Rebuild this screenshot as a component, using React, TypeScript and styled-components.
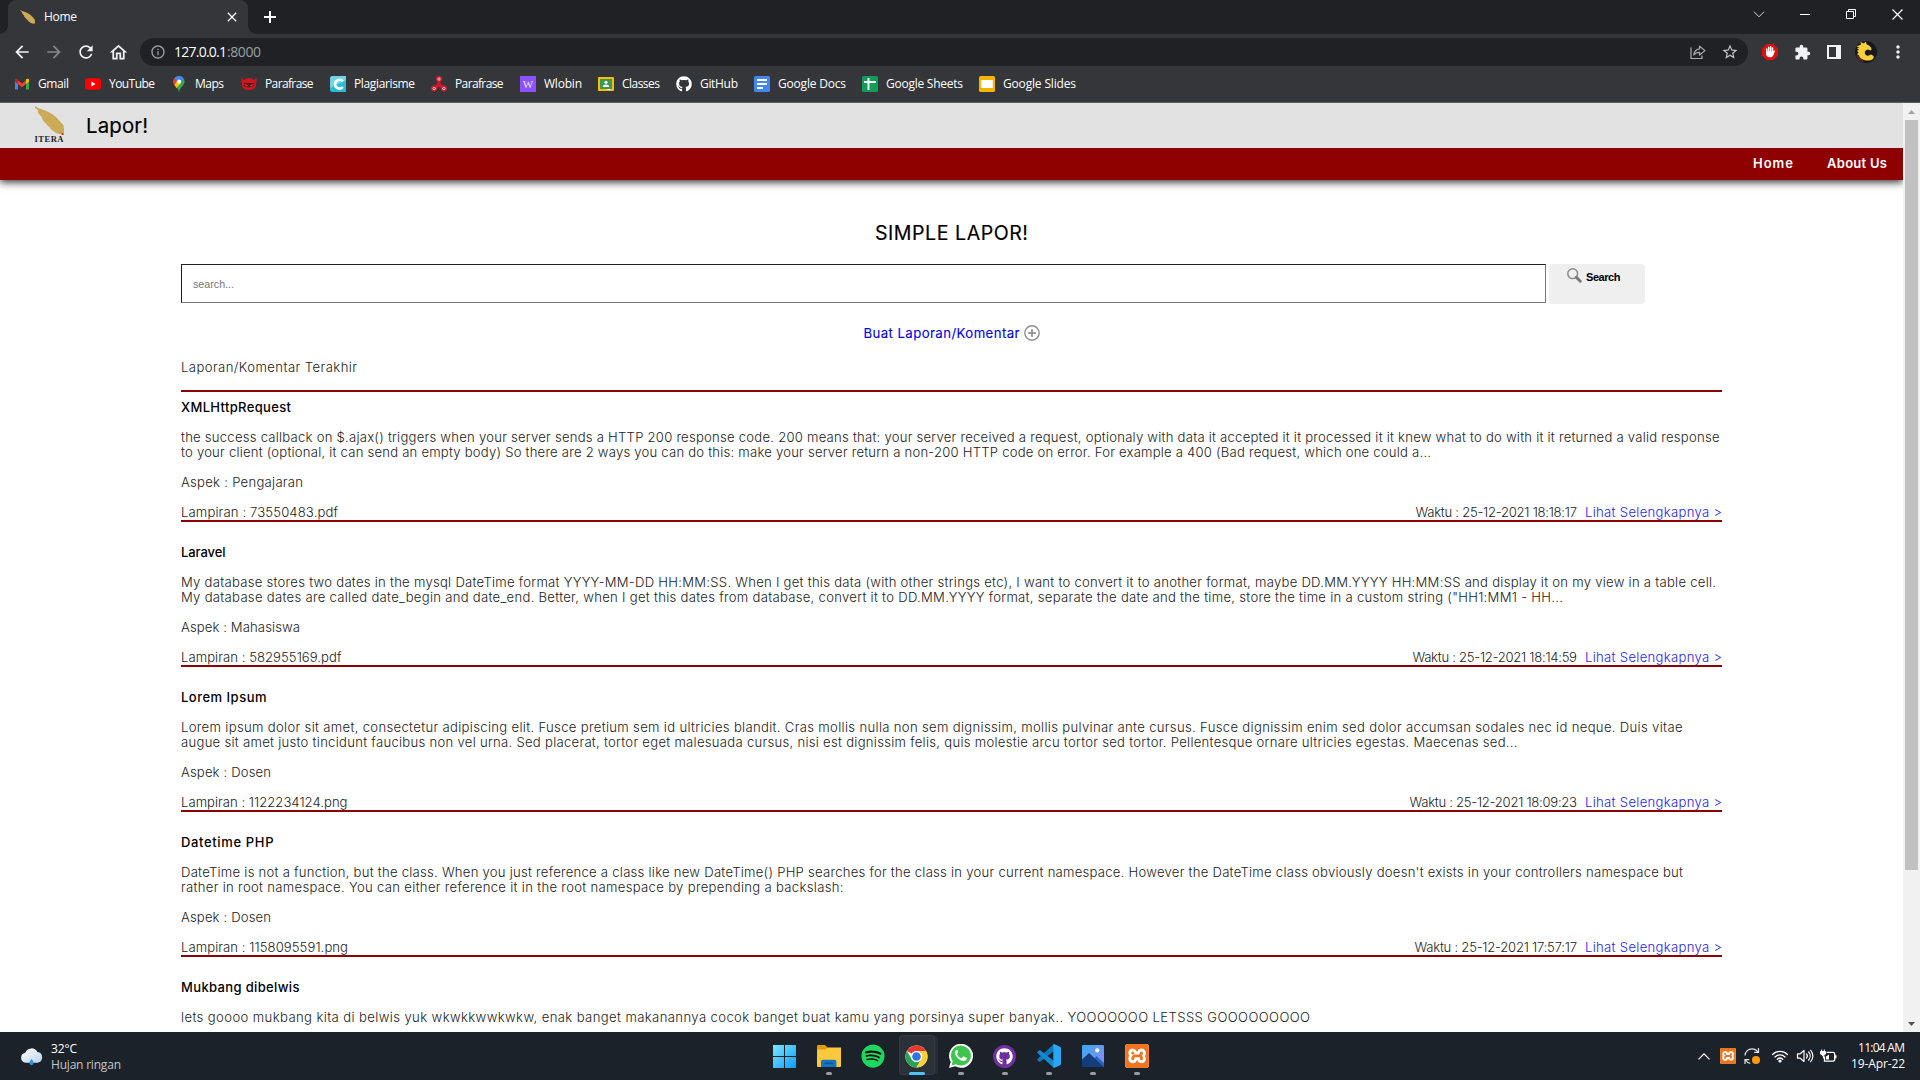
import React, { useLayoutEffect, useRef, useState } from 'react';
import styled, { createGlobalStyle, css } from 'styled-components';
import {
  MdArrowBack, MdArrowForward, MdRefresh, MdOutlineHome, MdInfoOutline,
  MdStarBorder, MdMoreVert, MdExtension, MdClose,
} from 'react-icons/md';
import { FaGithub, FaSpotify } from 'react-icons/fa';
import { SiXampp } from 'react-icons/si';

const Global = createGlobalStyle`
  * { box-sizing: border-box; }
  body { margin: 0; background: #fff; overflow: hidden; }
  p, h1, h2, h3 { margin: 0; }
  svg { display: block; flex: none; }
  a { text-decoration: none; }
`;

const UI = `'Open Sans', 'Noto Sans', sans-serif`;
const SITE = `Inter, 'Open Sans', sans-serif`;

/* ---------- text set to a fixed measure ---------- */

const Measure = styled.span<{ $w: number }>`
  display: inline-block;
  width: ${p => p.$w}px;
  white-space: nowrap;
`;

function Fit({ w, children }: { w: number; children: string }) {
  const ref = useRef<HTMLSpanElement>(null);
  const [gap, setGap] = useState(0);
  useLayoutEffect(() => {
    const natural = ref.current!.getBoundingClientRect().width;
    setGap((w - natural) / Math.max(1, children.length - 1));
  }, [w, children]);
  return (
    <Measure $w={w}>
      <span ref={ref} style={{ letterSpacing: gap }}>{children}</span>
    </Measure>
  );
}

/* ---------- browser chrome ---------- */

const Screen = styled.div`
  display: flex;
  flex-direction: column;
  width: 1920px;
  height: 1080px;
  overflow: hidden;
  font-family: ${UI};
`;

const TabStrip = styled.div`
  display: flex;
  flex: none;
  height: 34px;
  padding-left: 8px;
  background: #202124;
  color: #fff;
`;

const Tab = styled.div`
  position: relative;
  display: flex;
  align-items: center;
  width: 240px;
  height: 34px;
  padding: 0 8px 0 12px;
  border-radius: 8px 8px 0 0;
  background: #35363a;
  font-size: 12px;
  line-height: 16px;
  &::before, &::after {
    content: '';
    position: absolute;
    bottom: 0;
    width: 8px;
    height: 8px;
  }
  &::before { left: -8px; background: radial-gradient(circle at 0 0, #202124 7.5px, #35363a 8px); }
  &::after { right: -8px; background: radial-gradient(circle at 100% 0, #202124 7.5px, #35363a 8px); }
`;

const TabTitle = styled.span`
  flex: 1;
  margin-left: 9px;
`;

const NewTab = styled.div`
  display: flex;
  align-items: center;
  margin-left: 16px;
`;

const WindowButtons = styled.div`
  display: flex;
  margin-left: auto;
  height: 28px;
`;

const WindowButton = styled.div`
  display: grid;
  place-items: center;
  width: 46px;
`;

const Toolbar = styled.div`
  display: flex;
  flex: none;
  align-items: center;
  height: 36px;
  padding: 0 6px;
  background: #35363a;
  color: #f1f3f4;
`;

const ToolButton = styled.div<{ $dim?: boolean }>`
  display: grid;
  place-items: center;
  width: 32px;
  height: 32px;
  color: ${p => (p.$dim ? '#86878a' : '#f1f3f4')};
`;

const Omnibox = styled.div`
  display: flex;
  flex: 1;
  align-items: center;
  height: 28px;
  margin: 0 6px;
  padding: 0 2px 0 10px;
  border-radius: 14px;
  background: #202124;
  color: #9aa0a6;
  font-size: 14px;
  line-height: 20px;
`;

const Host = styled.span`
  margin-left: 8px;
  color: #fff;
`;

const OmniActions = styled.div`
  display: flex;
  margin-left: auto;
`;

const Bookmarks = styled.div`
  display: flex;
  flex: none;
  align-items: center;
  height: 33px;
  padding: 0 0 4px 14px;
  background: #35363a;
  border-bottom: 1px solid #5f6064;
  color: #fff;
  font-size: 12px;
  line-height: 16px;
`;

const Bookmark = styled.div<{ $w: number }>`
  display: flex;
  flex: none;
  align-items: center;
  gap: 8px;
  width: ${p => p.$w}px;
`;

/* ---------- page ---------- */

const Viewport = styled.div`
  display: flex;
  flex: none;
  height: 929px;
`;

const Page = styled.main`
  flex: 1;
  overflow: hidden;
  background: #fff;
  color: #000;
  font-family: ${SITE};
`;

const Brand = styled.header`
  position: relative;
  z-index: 1;
  display: flex;
  height: 45px;
  padding-left: 33px;
  background: #e2e2e2;
`;

const BrandName = styled.h1`
  margin: 10px 0 0 21px;
  font-size: 20.4px;
  font-weight: 400;
  line-height: 25px;
  -webkit-text-stroke: 0.15px #000;
`;

const Nav = styled.nav`
  display: flex;
  justify-content: flex-end;
  gap: 34px;
  height: 32px;
  padding: 8px 16px 0 0;
  background: #8f0000;
  box-shadow: 0 2px 8px rgba(0, 0, 0, 0.85);
  font-size: 13px;
  font-weight: 600;
  line-height: 15px;
`;

const NavLink = styled.a`
  color: #fff;
`;

const Content = styled.section`
  display: flex;
  flex-direction: column;
  padding: 41px 181px 0 181px;
`;

const Heading = styled.h2`
  align-self: center;
  font-size: 19.6px;
  font-weight: 400;
  line-height: 24px;
  -webkit-text-stroke: 0.15px #000;
`;

const SearchRow = styled.div`
  display: flex;
  gap: 3px;
  height: 40px;
  margin-top: 19px;
  font-family: 'Liberation Sans', Arial, sans-serif;
`;

const SearchInput = styled.div`
  width: 1365px;
  height: 39px;
  padding: 13px 11px 0;
  border: 1px solid #767676;
  border-top-color: #202020;
  border-left-color: #202020;
  color: #757575;
  font-size: 10.67px;
  line-height: 13px;
`;

const SearchButton = styled.div`
  display: flex;
  gap: 4px;
  width: 96px;
  height: 40px;
  padding: 4px 0 0 18px;
  border-radius: 3px;
  background: #efefef;
  font-size: 11px;
  font-weight: 700;
  line-height: 18px;
`;

const CreateLink = styled.a`
  display: flex;
  align-self: center;
  gap: 4px;
  height: 16px;
  margin-top: 21px;
  color: #0000ee;
  font-size: 13.2px;
  font-weight: 400;
  -webkit-text-stroke: 0.1px #0000ee;
  span { line-height: 15px; }
`;

const CreateLabel = styled.span`
  margin-top: 1px;
`;

const textLine = css`
  font-size: 13.1px;
  font-weight: 300;
  line-height: 15px;
`;

const ListTitle = styled.p`
  ${textLine}
  height: 30px;
  margin-top: 19px;
  color: #222;
`;

const List = styled.div`
  border-top: 2px solid #8b0000;
  padding-top: 8px;
`;

const Report = styled.article`
  ${textLine}
  display: flex;
  flex-direction: column;
  gap: 15px;
  margin-bottom: 23px;
  border-bottom: 2px solid #8b0000;
  color: #222;
  &:last-child { border-bottom: 0; }
`;

const ReportTitle = styled.h3`
  color: #000;
  font-size: 13px;
  font-weight: 500;
  line-height: 15px;
`;

const ReportText = styled.div`
  display: flex;
  flex-direction: column;
`;

const ReportFooter = styled.div`
  display: flex;
  justify-content: space-between;
`;

const Stamp = styled.div`
  display: flex;
  gap: 8px;
`;

const More = styled.a`
  color: #1d1df0;
`;

const Line = styled.div`
  height: 15px;
`;

const Scrollbar = styled.div`
  display: flex;
  flex-direction: column;
  align-items: center;
  justify-content: space-between;
  width: 17px;
  background: #f1f1f1;
`;

const ScrollArrow = styled.div<{ $down?: boolean }>`
  display: grid;
  place-items: center;
  width: 17px;
  height: 17px;
  color: ${p => (p.$down ? '#505050' : '#a3a3a3')};
  svg { transform: ${p => (p.$down ? 'rotate(180deg)' : 'none')}; }
`;

const Thumb = styled.div`
  width: 13px;
  height: 750px;
  margin-bottom: auto;
  background: #c1c1c1;
`;

/* ---------- taskbar ---------- */

const Taskbar = styled.footer`
  display: grid;
  flex: none;
  grid-template-columns: 1fr auto 1fr;
  height: 48px;
  background: #1c2229;
  color: #fff;
  font-size: 12px;
  line-height: 16px;
`;

const Weather = styled.div`
  display: flex;
  align-items: center;
  gap: 8px;
  padding-left: 20px;
`;

const WeatherText = styled.div`
  display: flex;
  flex-direction: column;
  padding-top: 1px;
  & > :last-child { color: #c3c6c9; }
`;

const Apps = styled.div`
  display: flex;
  align-items: center;
  padding: 0 0 2px 1px;
`;

const TaskButton = styled.div<{ $active?: boolean }>`
  display: flex;
  flex-direction: column;
  align-items: center;
  justify-content: flex-end;
  gap: 3px;
  width: 36px;
  height: 40px;
  margin: 0 4px;
  border-radius: 4px;
  background: ${p => (p.$active ? '#2b3138' : 'transparent')};
  box-shadow: ${p => (p.$active ? 'inset 0 0 0 1px #343a41, 4px 0 0 -1px #272d34' : 'none')};
`;

const Glyph = styled.div`
  display: grid;
  place-items: center;
  height: 26px;
`;

const Indicator = styled.i<{ $kind: 'none' | 'open' | 'active' }>`
  width: ${p => (p.$kind === 'active' ? 16 : 6)}px;
  height: 3px;
  border-radius: 2px;
  background: ${p => ({ none: 'transparent', open: '#9a9da0', active: '#4cc2ff' }[p.$kind])};
`;

const Tray = styled.div`
  display: flex;
  align-items: center;
  justify-content: flex-end;
  padding-right: 15px;
`;

const TrayIcon = styled.div<{ $w: number }>`
  display: grid;
  place-items: center;
  width: ${p => p.$w}px;
`;

const Clock = styled.div`
  display: flex;
  flex-direction: column;
  align-items: flex-end;
  margin-left: 7px;
`;

const XamppTile = styled.div<{ $s: number }>`
  display: grid;
  place-items: center;
  width: ${p => p.$s}px;
  height: ${p => p.$s}px;
  border-radius: ${p => p.$s / 8}px;
  background: #fff;
  color: #f0741f;
`;

/* ---------- drawings ---------- */

const Feather = ({ w, h }: { w: number; h: number }) => (
  <svg width={w} height={h} viewBox="0 0 30 30" preserveAspectRatio="none">
    <path d="M1 0 L4 2 L9 4 L14 6 L19 9 L23 12.500 L26 16 L29.500 20 L30 25 L29.500 30 L23 28.500 L18 25 L13.500 20 L9 15 L7.500 11 L4 7 L3.500 4 L1 2Z" fill="#c9aa52" />
    <path d="M7 6L26 27M11 7L28 25M15 9L29 23M9 11L24 28M10 15L22 28" stroke="#d9c286" strokeWidth=".6" strokeDasharray="1 1" />
    <circle cx="28.500" cy="29" r="1" fill="#d22" />
  </svg>
);

const LogoBox = styled.div`
  display: flex;
  flex-direction: column;
  align-items: center;
  width: 32px;
  padding-top: 3px;
  color: #222;
  font: 700 8.500px/9px 'Liberation Serif', serif;
`;

const IconGmail = () => (
  <svg width="16" height="16" viewBox="0 0 16 16">
    <path d="M1 4v9.500h3V7z" fill="#4285f4" /><path d="M15 4v9.500h-3V7z" fill="#34a853" />
    <path d="M4 4.300 8 7.400l4-3.100v3.800L8 11.200 4 8z" fill="#ea4335" />
    <path d="M1 4.200C1 2.500 2.800 2.300 4 3.300V8L1 5.700z" fill="#c5221f" /><path d="M15 4.200c0-1.700-1.800-1.900-3-.9V8l3-2.300z" fill="#fbbc04" />
  </svg>
);
const IconYouTube = () => (
  <svg width="16" height="16" viewBox="0 0 16 16"><rect y="2.300" width="16" height="11.400" rx="3" fill="#f00" /><path d="M6.400 5.600v4.800L10.500 8z" fill="#fff" /></svg>
);
const IconMaps = () => (
  <svg width="16" height="16" viewBox="0 0 16 16">
    <path d="M8 0a5.600 5.600 0 0 0-5.600 5.600C2.400 9.500 6.800 11 8 16c1.200-5 5.600-6.500 5.600-10.400A5.600 5.600 0 0 0 8 0z" fill="#34a853" />
    <path d="M3.200 8.700 6.300 4.800 9.800 7.200 5.600 12C4.800 10.800 3.700 9.800 3.200 8.700z" fill="#fbbc04" />
    <path d="M3.700 2A5.600 5.600 0 0 0 3.200 8.700L6.500 5z" fill="#ea4335" />
    <path d="M3.700 2A5.600 5.600 0 0 1 12.800 2.800L9.500 6.800 6.200 4.500z" fill="#4285f4" />
    <circle cx="8" cy="5.600" r="2.100" fill="#fff" />
  </svg>
);
const IconNinja = () => (
  <svg width="16" height="16" viewBox="0 0 16 16">
    <path d="M.8 2 3 4a8 8 0 0 1 10 0l2.200-2c.8 2 .6 3-.2 4.500C16 11 13 14 8 14S0 11 1 6.500C.2 5 0 4 .8 2z" fill="#d3141c" />
    <path d="M2.800 7h10.400v3c-2 .9-3.700 1.200-5.200 1.200s-3.200-.3-5.200-1.200z" fill="#4a2023" />
    <path d="M3.400 7.600 7.200 9.400 6 10.500C4.600 10.500 3.500 9.300 3.400 7.600zM12.600 7.600 8.800 9.400 10 10.500c1.400 0 2.500-1.200 2.600-2.900z" fill="#f0202a" />
  </svg>
);
const IconPlag = () => (
  <svg width="16" height="16" viewBox="0 0 16 16">
    <path d="M0 2.500A2.500 2.500 0 0 1 2.500 0H16v16H2.500A2.500 2.500 0 0 1 0 13.500z" fill="#28bcd6" /><path d="M0 2.500A2.500 2.500 0 0 1 2.500 0H16v4L0 12z" fill="#9fe3ec" opacity=".6" />
    <path d="M12.800 5.300A4.400 4.400 0 1 0 12.800 11" fill="none" stroke="#fff" strokeWidth="2.700" />
  </svg>
);
const IconSpinner = () => (
  <svg width="16" height="16" viewBox="0 0 16 16">
    <path d="M8 3v6M8 8.500 3.300 12.300M8 8.500l4.700 3.800" stroke="#d3122b" strokeWidth="3.400" />
    {[[8, 3], [3.1, 12.5], [12.9, 12.5]].map(([x, y]) => (
      <g key={x}><circle cx={x} cy={y} r="3" fill="#e0182f" /><circle cx={x} cy={y} r="1.500" fill="#e9dfe0" /><circle cx={x} cy={y} r=".7" fill="#533" /></g>
    ))}
  </svg>
);
const WTile = styled.span`
  display: grid;
  place-items: center;
  width: 16px;
  height: 16px;
  background: #8c52ff;
  color: #f0e8ff;
  font: 11px/16px 'Liberation Serif', serif;
`;
const IconClass = () => (
  <svg width="16" height="16" viewBox="0 0 16 16">
    <rect y="1" width="16" height="14" rx="1" fill="#fbbc04" /><rect x="2" y="3" width="12" height="10" fill="#3b9a52" />
    <circle cx="8" cy="6.300" r="1.500" fill="#fff" /><path d="M4.800 11c0-2 1.500-2.600 3.200-2.600s3.200.6 3.200 2.600z" fill="#fff" /><path d="M9 13h4v1H9z" fill="#e8e8e8" />
  </svg>
);
const IconDocs = () => (
  <svg width="16" height="16" viewBox="0 0 16 16"><rect width="16" height="16" rx="1.500" fill="#4285f4" /><path d="M3 4h10M3 8h10M3 12h6" stroke="#fff" strokeWidth="1.800" /></svg>
);
const IconSheets = () => (
  <svg width="16" height="16" viewBox="0 0 16 16"><rect width="16" height="16" rx="1.500" fill="#0f9d58" /><path d="M2 6h12M6.500 2v12" stroke="#fff" strokeWidth="1.900" /></svg>
);
const IconSlides = () => (
  <svg width="16" height="16" viewBox="0 0 16 16"><rect width="16" height="16" rx="1.500" fill="#f4b400" /><path d="M2.200 4h11.600v8H2.200z" fill="#fff" /></svg>
);

const IconNewTab = () => (
  <svg width="12" height="12" viewBox="0 0 12 12"><path d="M6 0v12M0 6h12" stroke="#fff" strokeWidth="2" /></svg>
);
const IconShare = () => (
  <svg width="16" height="16" viewBox="0 0 16 16" fill="none" stroke="#a9adb1" strokeWidth="1.200">
    <path d="M1 3.500V14.500h11v-3" /><path d="M9.500 2.200 15 6.600 9.500 11V8.300C7 8.300 5.200 9 3.800 11 4.200 7.500 6 5.300 9.500 4.900z" strokeLinejoin="round" />
  </svg>
);
const IconHand = () => (
  <svg width="16" height="16" viewBox="0 0 16 16">
    <path d="M4.700 0h6.600L16 4.700v6.600L11.300 16H4.700L0 11.300V4.700z" fill="#e01010" />
    <path d="M4.800 5v4M6.700 3.300V8M8.600 2.800V8M10.500 4V9" stroke="#fff" strokeWidth="1.500" strokeLinecap="round" />
    <path d="M4.050 7.500h7.200l1-1.300.8.600-1.600 4.200C10.800 12.700 9.800 13.300 8 13.300c-2.400 0-3.950-1.300-3.950-3.500z" fill="#fff" />
  </svg>
);
const IconAvatar = () => (
  <svg width="22" height="22" viewBox="0 0 22 22">
    <circle cx="11" cy="11" r="11" fill="#17181b" /><path d="M1 14a11 11 0 0 0 8 7.700L5 15z" fill="#5a2530" />
    <path d="M1.500 5.500 6 3.500 5.500 1l3.500 1.500L10.500.5l1.300 3c2.500.6 4 2.300 4.900 4.700l-1.500 1.300-2-1c-2 0-3.500 1.300-3.400 3.300.1 1.900 1.500 2.900 3.200 2.900l3-1.200 2.600 1.500c.6 2.200-.8 3.900-3.200 4.300C10 20 5.500 18.500 4 14.500L1.800 13l1.900-1L2 9.500l2-.5L2 7l2.500-.6z" fill="#f6cf3b" />
  </svg>
);
const IconPlus = () => (
  <svg width="16" height="16" viewBox="0 0 16 16" fill="none">
    <circle cx="8" cy="8" r="7.200" stroke="#8d8d8d" strokeWidth="1.400" /><path d="M8 4.200v7.600M4.200 8h7.600" stroke="#999" strokeWidth="2" />
  </svg>
);
const IconLens = () => (
  <svg width="15" height="15" viewBox="0 0 15 15" fill="none">
    <circle cx="5.700" cy="5.700" r="4.900" stroke="#8a8a8a" strokeWidth="1.500" /><path d="m9.300 9.300 4 4" stroke="#777" strokeWidth="2.900" strokeLinecap="round" />
  </svg>
);
const IconTriangle = () => (<svg width="7" height="4" viewBox="0 0 7 4"><path d="M3.500 0 7 4H0z" fill="currentColor" /></svg>);

const IconCloud = () => (
  <svg width="23" height="19" viewBox="0 0 22 18">
    <defs><linearGradient id="cl" x1="0" y1="0" x2="1" y2="1"><stop offset="0" stopColor="#fff" /><stop offset="1" stopColor="#b9d3ea" /></linearGradient></defs>
    <path d="M5.500 15a4.800 4.800 0 0 1-.5-9.500A6.300 6.300 0 0 1 16.600 4.700a5.200 5.200 0 0 1 .2 10.300z" fill="url(#cl)" />
    <path d="M11 11.500c1.500 2 2 2.800 2 3.800a2 2 0 0 1-4 0c0-1 .5-1.800 2-3.800z" fill="#2f8fe6" />
  </svg>
);
const IconWindows = () => (
  <svg width="23" height="23" viewBox="0 0 23 23">
    <defs><linearGradient id="wn" gradientUnits="userSpaceOnUse" x1="0" y1="0" x2="23" y2="23"><stop offset="0" stopColor="#7be6fb" /><stop offset="1" stopColor="#0f9bfb" /></linearGradient></defs>
    <path d="M0 0h11v11H0zM12 0h11v11H12zM0 12h11v11H0zM12 12h11v11H12z" fill="url(#wn)" />
  </svg>
);
const IconFolder = () => (
  <svg width="24" height="22" viewBox="0 0 24 22">
    <path d="M0 1.500C0 .7.500 0 1.300 0H8l2.500 2.500V8H0z" fill="#e09a0c" /><path d="M0 4.500h8.500l2-2H24V21a1 1 0 0 1-1 1H1a1 1 0 0 1-1-1z" fill="#fdc93c" />
    <path d="M4 22v-5.500A1.700 1.700 0 0 1 5.700 14.800h12a1.700 1.700 0 0 1 1.700 1.700V22z" fill="#1573c4" /><path d="M7.500 18.300h8.500" stroke="#0c5494" strokeWidth="1.400" />
  </svg>
);
const IconChrome = () => (
  <svg width="23" height="23" viewBox="0 0 48 48">
    <circle cx="24" cy="24" r="23" fill="#fff" />
    <path d="M4.100 12.500A23 23 0 0 1 43.900 12.500H24A11.500 11.500 0 0 0 14 18.300z" fill="#e8392c" /><path d="M4.100 12.500A23 23 0 0 0 24 47L34 29.700A11.500 11.500 0 0 1 14 29.700z" fill="#2ba24c" />
    <path d="M43.900 12.500A23 23 0 0 1 24 47L34 29.700A11.500 11.500 0 0 0 34 18.300L24 12.500z" fill="#fdd032" />
    <circle cx="24" cy="24" r="11.500" fill="#fff" /><circle cx="24" cy="24" r="9" fill="#2f73e8" />
  </svg>
);
const WhatsBox = () => (
  <svg width="24" height="24" viewBox="0 0 24 24">
    <path d="M0 24 1.700 17.900A12 12 0 1 1 6.200 22.300z" fill="#fff" /><path d="M2.600 21.400 3.700 17.300A10 10 0 1 1 7 20.300z" fill="#3fc351" />
    <path d="M8.900 6.500c-.3-.6-.5-.6-.8-.6-1.200 0-2.200 1.300-2.200 2.900 0 2 2 4.900 4.600 6.600 3 1.900 5.200 1.700 6.400.8.900-.7 1-1.500.9-2.200l-3-1.500c-.4-.1-.6 0-.8.3l-1 1.200c-.3.300-.5.200-.9.100-1.900-.8-3-2-4-3.700-.2-.4 0-.6.200-.8.400-.5.900-1 .8-1.500z" fill="#fff" />
  </svg>
);
const GithubDesk = styled.div`
  display: grid;
  place-items: center;
  width: 23px;
  height: 23px;
  border-radius: 50%;
  background: #6f2f9f;
  color: #fff;
`;
const SpotifyDisc = styled.div`
  width: 24px;
  height: 24px;
  border-radius: 50%;
  background: #111;
  color: #1ed760;
`;
const IconCode = () => (
  <svg width="24" height="24" viewBox="0 0 24 24">
    <path d="M17.300 6.800 2.800 18 .5 16.300c-.4-.4-.4-.9 0-1.300L17 0z" fill="#0f78c0" /><path d="M17.300 17.200 2.800 6 .5 7.700c-.4.4-.4.900 0 1.300L17 24z" fill="#1389d6" />
    <path d="M17 0 23 2.700a1.500 1.500 0 0 1 1 1.300v16a1.500 1.500 0 0 1-1 1.300L17 24c-.6-.3-.7-.8-.7-1.200V1.200c0-.4.100-.9.700-1.200z" fill="#2aa5f2" />
  </svg>
);
const IconPhotos = () => (
  <svg width="22" height="22" viewBox="0 0 22 22">
    <defs><linearGradient id="ph" x1="0" y1="0" x2="1" y2="1"><stop offset="0" stopColor="#3aa8f0" /><stop offset="1" stopColor="#8a8cf0" /></linearGradient></defs>
    <rect width="22" height="22" rx="1" fill="url(#ph)" /><path d="M11 14.500 14.500 11 22 18v4h-8z" fill="#2a67c4" /><path d="M0 14.500 7 8l15 14H0z" fill="#123f7c" /><circle cx="15.300" cy="5.300" r="2.100" fill="#fff" />
  </svg>
);
const IconSync = () => (
  <svg width="18" height="18" viewBox="0 0 18 18" fill="none" stroke="#dfe1e3" strokeWidth="1.200">
    <path d="M2 8.500C2.300 4.500 5.300 1.800 9 1.800c2.500 0 4.600 1.200 6 3.200M15.500 1v4.300h-4.300M2 17v-4.300h4.300M2.500 13c1 1.700 2.700 3 4.700 3.400" /><circle cx="13" cy="13" r="4" fill="#ff9b12" stroke="none" />
  </svg>
);
const IconWifi = () => (
  <svg width="18" height="16" viewBox="0 0 18 16" fill="none" stroke="#fff" strokeWidth="1.200" strokeLinecap="round">
    <path d="M1.500 6.500a10.600 10.600 0 0 1 15 0M4 9a7 7 0 0 1 10 0M6.300 11.300a3.900 3.900 0 0 1 5.400 0" /><circle cx="9" cy="13" r="1" fill="#fff" />
  </svg>
);
const IconVolume = () => (
  <svg width="18" height="16" viewBox="0 0 18 16" fill="none" stroke="#fff" strokeWidth="1.200" strokeLinecap="round" strokeLinejoin="round">
    <path d="M1.500 5.800h2.700L8 2.500v11L4.200 10.200H1.500zM10.500 6a3 3 0 0 1 0 4M12.600 4a6 6 0 0 1 0 8M14.700 2.300a8.600 8.600 0 0 1 0 11.400" />
  </svg>
);
const IconBattery = () => (
  <svg width="17" height="14" viewBox="0 0 17 14">
    <path d="M6.500 3.300H13a1.700 1.700 0 0 1 1.700 1.700v5.500a1.700 1.700 0 0 1-1.700 1.700H4.500V7.500" fill="none" stroke="#fff" strokeWidth="1.300" /><path d="M15 6.300h1.500v3H15zM9 5.500v5H6V7.500z" fill="#fff" />
    <path d="M1.700.5v2M4.300.5v2M.5 2.500h5V5L3.700 6.500v3M3 6.500.5 5V2.500" stroke="#fff" fill="#fff" strokeWidth="1" />
  </svg>
);

/* ---------- data ---------- */

const bookmarks = [
  { label: 'Gmail', w: 31, pitch: 71, icon: <IconGmail /> },
  { label: 'YouTube', w: 46, pitch: 86, icon: <IconYouTube /> },
  { label: 'Maps', w: 29, pitch: 70, icon: <IconMaps /> },
  { label: 'Parafrase', w: 48.5, pitch: 89, icon: <IconNinja /> },
  { label: 'Plagiarisme', w: 61, pitch: 101, icon: <IconPlag /> },
  { label: 'Parafrase', w: 48.5, pitch: 89, icon: <IconSpinner /> },
  { label: 'Wlobin', w: 38, pitch: 78, icon: <WTile>W</WTile> },
  { label: 'Classes', w: 38, pitch: 78, icon: <IconClass /> },
  { label: 'GitHub', w: 38, pitch: 78, icon: <FaGithub size={16} /> },
  { label: 'Google Docs', w: 68, pitch: 108, icon: <IconDocs /> },
  { label: 'Google Sheets', w: 77, pitch: 117, icon: <IconSheets /> },
  { label: 'Google Slides', w: 73, pitch: 117, icon: <IconSlides /> },
];

type Txt = [string, number];
interface ReportData { title: Txt; text: Txt[]; aspek?: Txt; file?: Txt; time?: Txt }

const reports: ReportData[] = [
  {
    title: ['XMLHttpRequest', 110],
    text: [
      ['the success callback on $.ajax() triggers when your server sends a HTTP 200 response code. 200 means that: your server received a request, optionaly with data it accepted it it processed it it knew what to do with it it returned a valid response', 1538.5],
      ['to your client (optional, it can send an empty body) So there are 2 ways you can do this: make your server return a non-200 HTTP code on error. For example a 400 (Bad request, which one could a...', 1250],
    ],
    aspek: ['Aspek : Pengajaran', 122], file: ['Lampiran : 73550483.pdf', 157], time: ['Waktu : 25-12-2021 18:18:17', 161.5],
  },
  {
    title: ['Laravel', 44.5],
    text: [
      ['My database stores two dates in the mysql DateTime format YYYY-MM-DD HH:MM:SS. When I get this data (with other strings etc), I want to convert it to another format, maybe DD.MM.YYYY HH:MM:SS and display it on my view in a table cell.', 1535],
      ['My database dates are called date_begin and date_end. Better, when I get this dates from database, convert it to DD.MM.YYYY format, separate the date and the time, store the time in a custom string ("HH1:MM1 - HH...', 1382],
    ],
    aspek: ['Aspek : Mahasiswa', 119], file: ['Lampiran : 582955169.pdf', 160.5], time: ['Waktu : 25-12-2021 18:14:59', 164.5],
  },
  {
    title: ['Lorem Ipsum', 85.5],
    text: [
      ['Lorem ipsum dolor sit amet, consectetur adipiscing elit. Fusce pretium sem id ultricies blandit. Cras mollis nulla non sem dignissim, mollis pulvinar ante cursus. Fusce dignissim enim sed dolor accumsan sodales nec id neque. Duis vitae', 1501.5],
      ['augue sit amet justo tincidunt faucibus non vel urna. Sed placerat, tortor eget malesuada cursus, nisi est dignissim felis, quis molestie arcu tortor sed tortor. Pellentesque ornare ultricies egestas. Maecenas sed...', 1336.5],
    ],
    aspek: ['Aspek : Dosen', 90], file: ['Lampiran : 1122234124.png', 166.5], time: ['Waktu : 25-12-2021 18:09:23', 167.5],
  },
  {
    title: ['Datetime PHP', 92.5],
    text: [
      ["DateTime is not a function, but the class. When you just reference a class like new DateTime() PHP searches for the class in your current namespace. However the DateTime class obviously doesn't exists in your controllers namespace but", 1502],
      ['rather in root namespace. You can either reference it in the root namespace by prepending a backslash:', 662.5],
    ],
    aspek: ['Aspek : Dosen', 90], file: ['Lampiran : 1158095591.png', 167], time: ['Waktu : 25-12-2021 17:57:17', 162.5],
  },
  {
    title: ['Mukbang dibelwis', 118.5],
    text: [['lets goooo mukbang kita di belwis yuk wkwkkwwkwkw, enak banget makanannya cocok banget buat kamu yang porsinya super banyak.. YOOOOOOO LETSSS GOOOOOOOOO', 1129]],
  },
];

const apps: { icon: React.ReactNode; state: 'none' | 'open' | 'active' }[] = [
  { icon: <IconWindows />, state: 'none' },
  { icon: <IconFolder />, state: 'open' },
  { icon: <SpotifyDisc><FaSpotify size={24} /></SpotifyDisc>, state: 'none' },
  { icon: <IconChrome />, state: 'active' },
  { icon: <WhatsBox />, state: 'open' },
  { icon: <GithubDesk><FaGithub size={17} /></GithubDesk>, state: 'open' },
  { icon: <IconCode />, state: 'open' },
  { icon: <IconPhotos />, state: 'open' },
  { icon: <XamppTile $s={24}><SiXampp size={24} /></XamppTile>, state: 'open' },
];

const Lines = ({ items }: { items: Txt[] }) => (
  <ReportText>{items.map(([t, w]) => <Line key={t}><Fit w={w}>{t}</Fit></Line>)}</ReportText>
);

export default function App() {
  return (
    <Screen>
      <Global />
      <TabStrip>
        <Tab>
          <Feather w={15} h={14} />
          <TabTitle><Fit w={33}>Home</Fit></TabTitle>
          <MdClose size={16} />
        </Tab>
        <NewTab><IconNewTab /></NewTab>
        <WindowButtons>
          <WindowButton><svg width="12" height="7" viewBox="0 0 12 7"><path d="m1 .8 5 5 5-5" stroke="#d5d5d6" fill="none" /></svg></WindowButton>
          <WindowButton><svg width="10" height="1"><path d="M0 0h10v1H0z" fill="#fff" /></svg></WindowButton>
          <WindowButton><svg width="10" height="10" fill="none" stroke="#fff"><path d="M.5 2.500h7v7h-7zM2.500 2.500v-2h7v7h-2" /></svg></WindowButton>
          <WindowButton><svg width="11" height="11" stroke="#fff" strokeWidth="1.200"><path d="m.5.5 10 10M10.500.5l-10 10" /></svg></WindowButton>
        </WindowButtons>
      </TabStrip>
      <Toolbar>
        <ToolButton><MdArrowBack size={20} /></ToolButton>
        <ToolButton $dim><MdArrowForward size={20} /></ToolButton>
        <ToolButton><MdRefresh size={20} /></ToolButton>
        <ToolButton><MdOutlineHome size={21} /></ToolButton>
        <Omnibox>
          <MdInfoOutline size={16} />
          <Host><Fit w={53}>127.0.0.1</Fit></Host>
          <Fit w={34}>:8000</Fit>
          <OmniActions>
            <ToolButton><IconShare /></ToolButton>
            <ToolButton><MdStarBorder size={18} color="#c4c7c9" /></ToolButton>
          </OmniActions>
        </Omnibox>
        <ToolButton><IconHand /></ToolButton>
        <ToolButton><MdExtension size={17} /></ToolButton>
        <ToolButton><svg width="14" height="14"><path d="M0 0h14v14H0zM2 2v10h7V2z" fill="#f1f3f4" fillRule="evenodd" /></svg></ToolButton>
        <ToolButton><IconAvatar /></ToolButton>
        <ToolButton><MdMoreVert size={20} /></ToolButton>
      </Toolbar>
      <Bookmarks>
        {bookmarks.map((b, i) => (
          <Bookmark key={i} $w={b.pitch}>{b.icon}<Fit w={b.w}>{b.label}</Fit></Bookmark>
        ))}
      </Bookmarks>

      <Viewport>
        <Page>
          <Brand>
            <LogoBox><Feather w={30} h={29} /><Fit w={29}>ITERA</Fit></LogoBox>
            <BrandName><Fit w={62}>Lapor!</Fit></BrandName>
          </Brand>
          <Nav>
            <NavLink><Fit w={40}>Home</Fit></NavLink>
            <NavLink><Fit w={60}>About Us</Fit></NavLink>
          </Nav>
          <Content>
            <Heading><Fit w={153}>SIMPLE LAPOR!</Fit></Heading>
            <SearchRow>
              <SearchInput><Fit w={41}>search...</Fit></SearchInput>
              <SearchButton><IconLens /><Fit w={34.5}>Search</Fit></SearchButton>
            </SearchRow>
            <CreateLink><CreateLabel><Fit w={156}>Buat Laporan/Komentar</Fit></CreateLabel><IconPlus /></CreateLink>
            <ListTitle><Fit w={176}>Laporan/Komentar Terakhir</Fit></ListTitle>
            <List>
              {reports.map(r => (
                <Report key={r.title[0]}>
                  <ReportTitle><Fit w={r.title[1]}>{r.title[0]}</Fit></ReportTitle>
                  <Lines items={r.text} />
                  {r.aspek && <Lines items={[r.aspek]} />}
                  {r.file && r.time && (
                    <ReportFooter>
                      <Line><Fit w={r.file[1]}>{r.file[0]}</Fit></Line>
                      <Stamp>
                        <Line><Fit w={r.time[1]}>{r.time[0]}</Fit></Line>
                        <More><Fit w={137}>{'Lihat Selengkapnya >'}</Fit></More>
                      </Stamp>
                    </ReportFooter>
                  )}
                </Report>
              ))}
            </List>
          </Content>
        </Page>
        <Scrollbar>
          <ScrollArrow><IconTriangle /></ScrollArrow>
          <Thumb />
          <ScrollArrow $down><IconTriangle /></ScrollArrow>
        </Scrollbar>
      </Viewport>

      <Taskbar>
        <Weather>
          <IconCloud />
          <WeatherText><Fit w={26}>32°C</Fit><Fit w={70}>Hujan ringan</Fit></WeatherText>
        </Weather>
        <Apps>
          {apps.map((a, i) => (
            <TaskButton key={i} $active={a.state === 'active'}><Glyph>{a.icon}</Glyph><Indicator $kind={a.state} /></TaskButton>
          ))}
        </Apps>
        <Tray>
          <TrayIcon $w={24}><svg width="12" height="7" viewBox="0 0 12 7"><path d="m.5 6.300 5.500-5.500 5.500 5.500" stroke="#fff" strokeWidth="1.200" fill="none" /></svg></TrayIcon>
          <TrayIcon $w={24}><XamppTile $s={16}><SiXampp size={16} /></XamppTile></TrayIcon>
          <TrayIcon $w={24}><IconSync /></TrayIcon>
          <TrayIcon $w={32}><IconWifi /></TrayIcon>
          <TrayIcon $w={16}><IconVolume /></TrayIcon>
          <TrayIcon $w={32}><IconBattery /></TrayIcon>
          <Clock><Fit w={47}>11:04 AM</Fit><Fit w={54}>19-Apr-22</Fit></Clock>
        </Tray>
      </Taskbar>
    </Screen>
  );
}
